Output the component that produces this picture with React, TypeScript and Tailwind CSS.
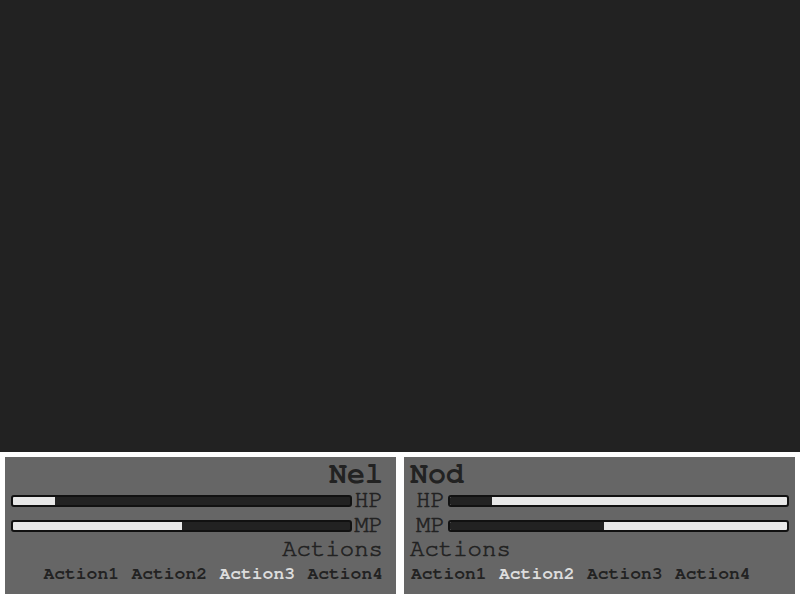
import React from 'react';

interface Fighter {
  name: string;
  side: 'left' | 'right';
  hp: number; // percent of the first segment
  mp: number;
  active: number; // highlighted action index
}

const FIGHTERS: Fighter[] = [
  { name: 'Nel', side: 'left', hp: 12.5, mp: 50, active: 2 },
  { name: 'Nod', side: 'right', hp: 12.5, mp: 45.7, active: 1 },
];

const ACTIONS = ['Action1', 'Action2', 'Action3', 'Action4'];

// light part grows from the left on the left panel, dark part on the right panel
function Bar({ pct, side }: { pct: number; side: 'left' | 'right' }) {
  return (
    <div
      className={
        'flex-1 h-[12px] mt-[7px] border-2 border-[#111] rounded-[3px] overflow-hidden flex ' +
        (side === 'left' ? 'bg-[#222]' : 'bg-[#e8e8e8]')
      }
    >
      <div
        className={side === 'left' ? 'h-full bg-[#e8e8e8]' : 'h-full bg-[#222]'}
        style={{ width: `${pct}%` }}
      />
    </div>
  );
}

function StatRow({ label, pct, side }: { label: string; pct: number; side: 'left' | 'right' }) {
  return (
    <div className="flex items-start h-[25px]">
      {side === 'left' ? (
        <>
          <Bar pct={pct} side={side} />
          <span className="ml-[2px] text-[24px] leading-[25px] [-webkit-text-stroke:0.6px_#222]">{label}</span>
        </>
      ) : (
        <>
          <span className="ml-[6px] mr-[3px] text-[24px] leading-[25px] [-webkit-text-stroke:0.6px_#222]">{label}</span>
          <Bar pct={pct} side={side} />
        </>
      )}
    </div>
  );
}

function Panel({ f }: { f: Fighter }) {
  const left = f.side === 'left';
  return (
    <div
      className={
        'w-[391px] bg-[#666] text-[#222] flex flex-col pt-[3px] ' +
        (left ? 'pl-[6px] pr-[13px] text-right' : 'pl-[6px] pr-[6px] text-left')
      }
    >
      <div className="text-[30px] leading-[28px] font-bold">{f.name}</div>
      <StatRow label="HP" pct={f.hp} side={f.side} />
      <StatRow label="MP" pct={f.mp} side={f.side} />
      <div className="text-[24px] leading-[23px] [-webkit-text-stroke:0.6px_#222]">Actions</div>
      <div className={'flex gap-[12.4px] ' + (left ? 'justify-end' : 'justify-start pl-[1px]')}>
        {ACTIONS.map((a, i) => (
          <span
            key={a}
            className={
              'text-[18px] leading-[26px] font-bold ' +
              (i === f.active ? 'text-[#ddd]' : 'text-[#222]')
            }
          >
            {a}
          </span>
        ))}
      </div>
    </div>
  );
}

export default function App() {
  return (
    <div className="w-[800px] h-[600px] flex flex-col bg-white font-['FreeMono','Courier',monospace]">
      {/* stage */}
      <div className="h-[452px] bg-[#222]" />
      {/* party panels */}
      <div className="flex-1 flex gap-[8px] px-[5px] pt-[5px] pb-[6px]">
        {FIGHTERS.map((f) => (
          <Panel key={f.name} f={f} />
        ))}
      </div>
    </div>
  );
}
